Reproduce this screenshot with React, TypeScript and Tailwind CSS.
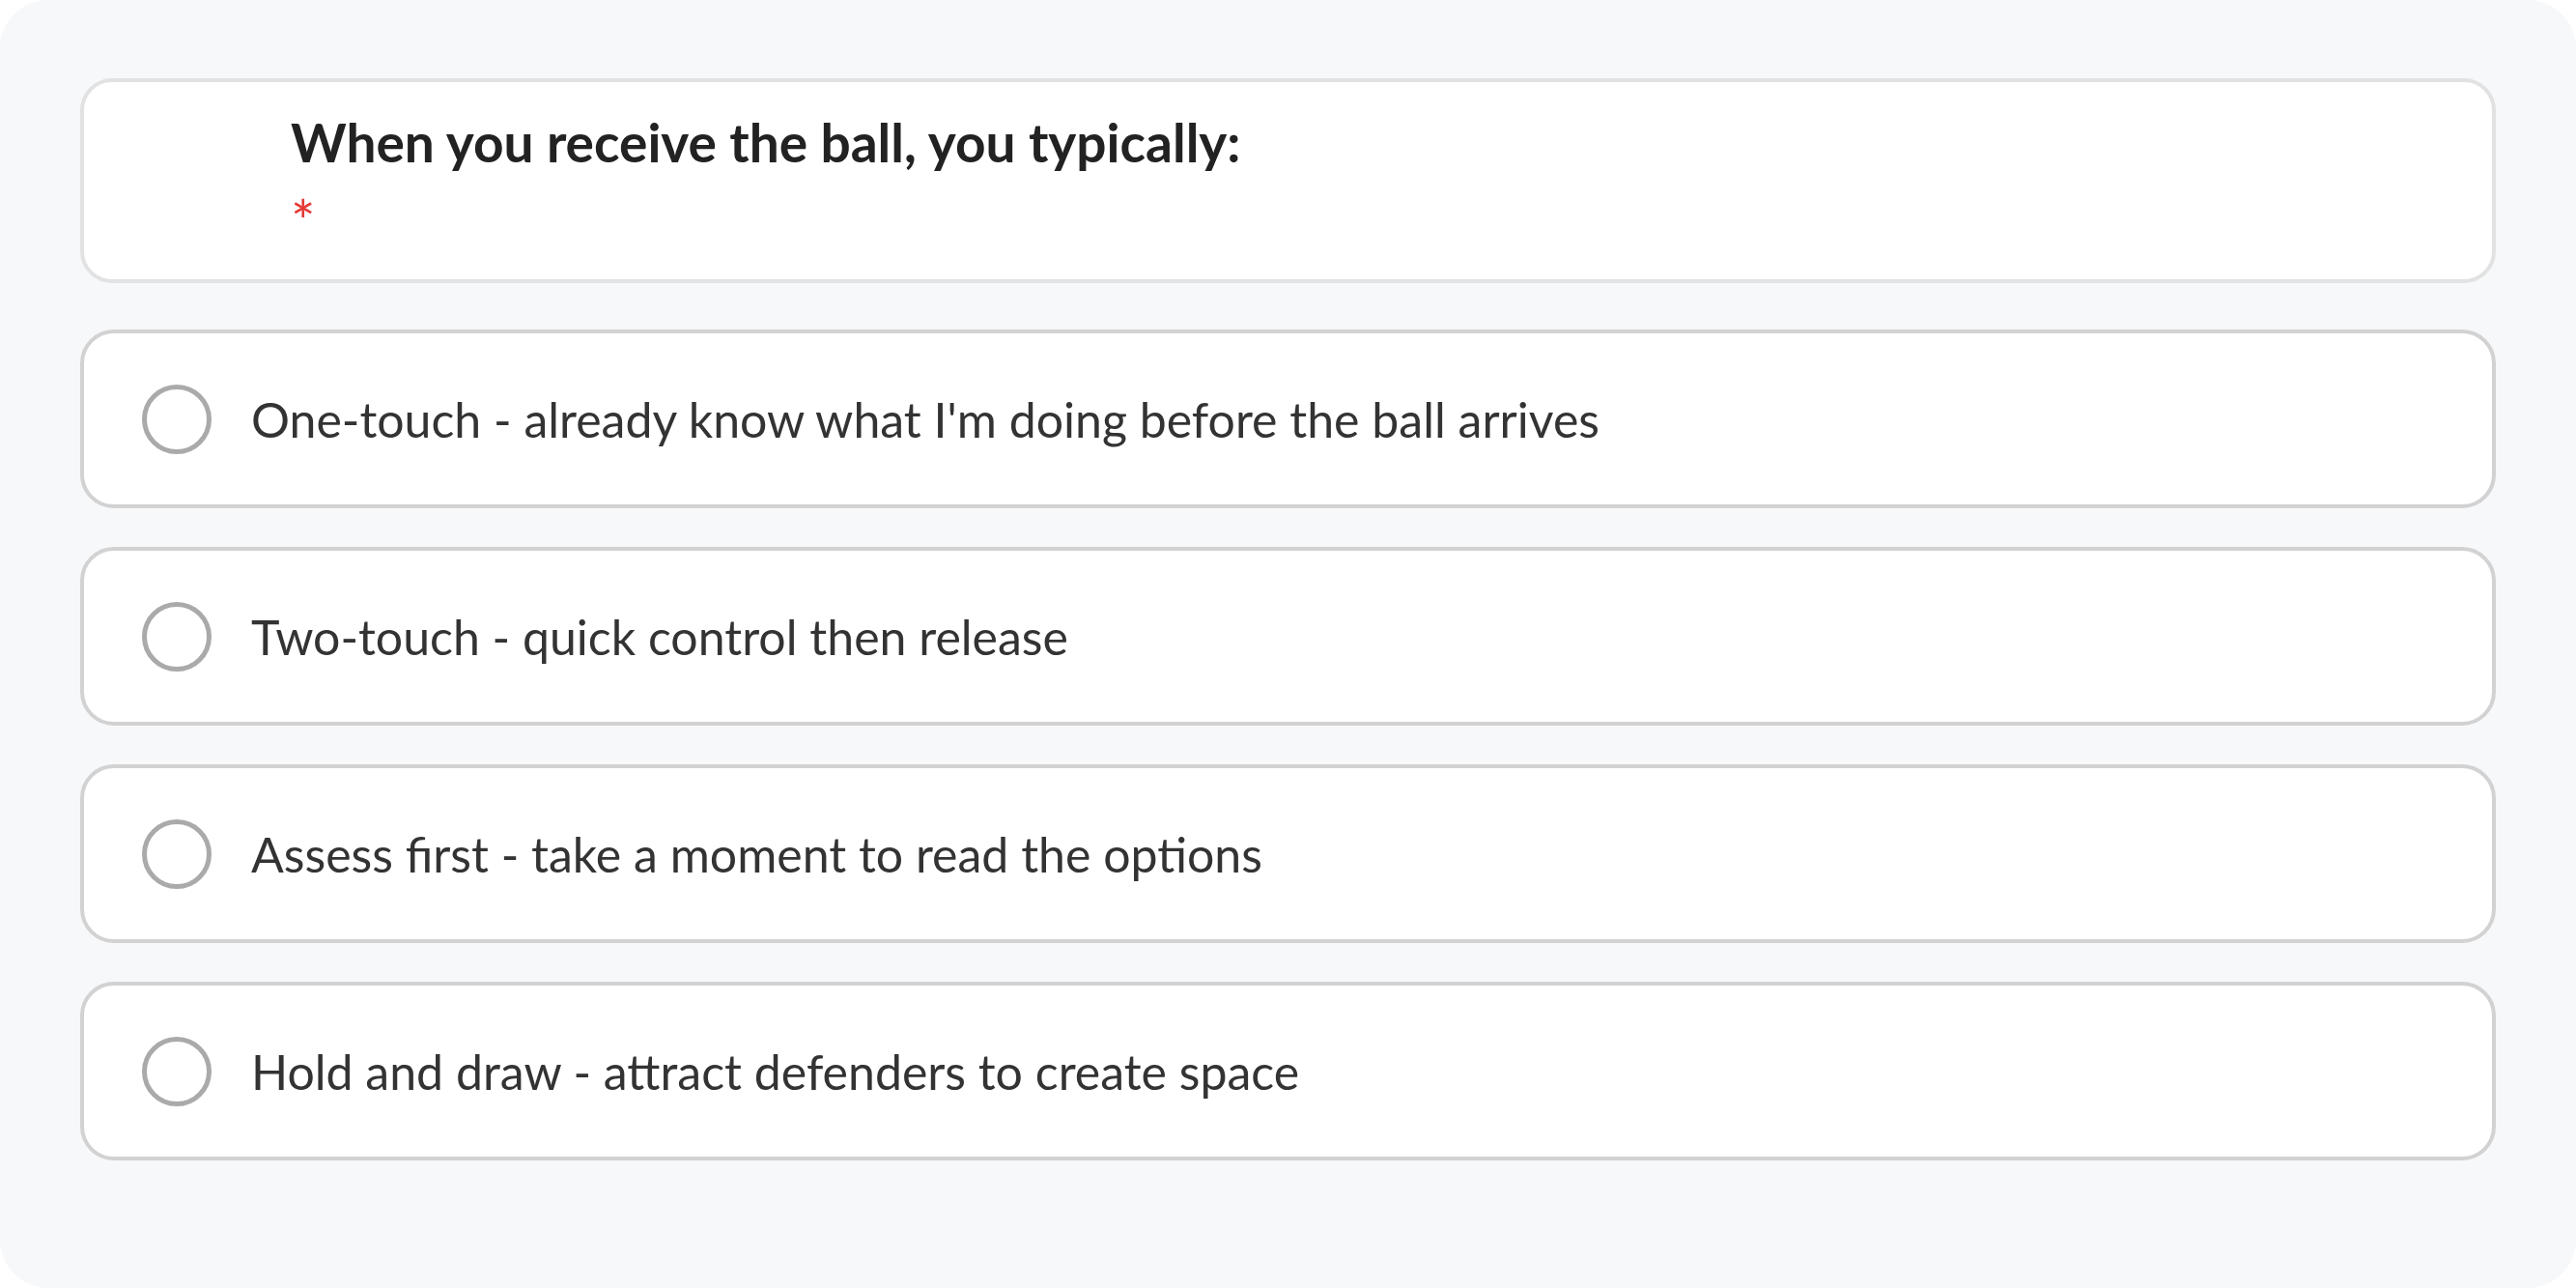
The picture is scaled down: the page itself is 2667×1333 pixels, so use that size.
import React from 'react';

const OPTIONS = [
  "One-touch - already know what I'm doing before the ball arrives",
  "Two-touch - quick control then release",
  "Assess first - take a moment to read the options",
  "Hold and draw - attract defenders to create space",
];

export default function App() {
  return (
    <div className="min-h-screen bg-white font-['Lato',sans-serif]">
      <div className="h-[1333px] rounded-[50px] bg-[#f7f8fa] px-[83px] pt-[81px]">
        <div className="h-[212px] rounded-[33px] border-4 border-[#e2e2e2] bg-white pl-[214px] pt-[29px]">
          <h2 className="text-[55px] leading-[1.2] font-bold text-[#222]">When you receive the ball, you typically:</h2>
          <div className="mt-[12px] text-[60px] leading-[1.2] text-[#e53935]">*</div>
        </div>
        <div className="mt-[48px] flex flex-col gap-[40px]">
          {OPTIONS.map((o, i) => (
            <label key={i} className="flex h-[185px] items-center rounded-[35px] border-4 border-[#d2d2d2] bg-white pl-[60px]">
              <span className="h-[72px] w-[72px] shrink-0 rounded-full border-[5px] border-[#aaaaaa]" />
              <span className="ml-[41px] text-[50px] leading-[1.2] text-[#333]">{o}</span>
            </label>
          ))}
        </div>
      </div>
    </div>
  );
}
